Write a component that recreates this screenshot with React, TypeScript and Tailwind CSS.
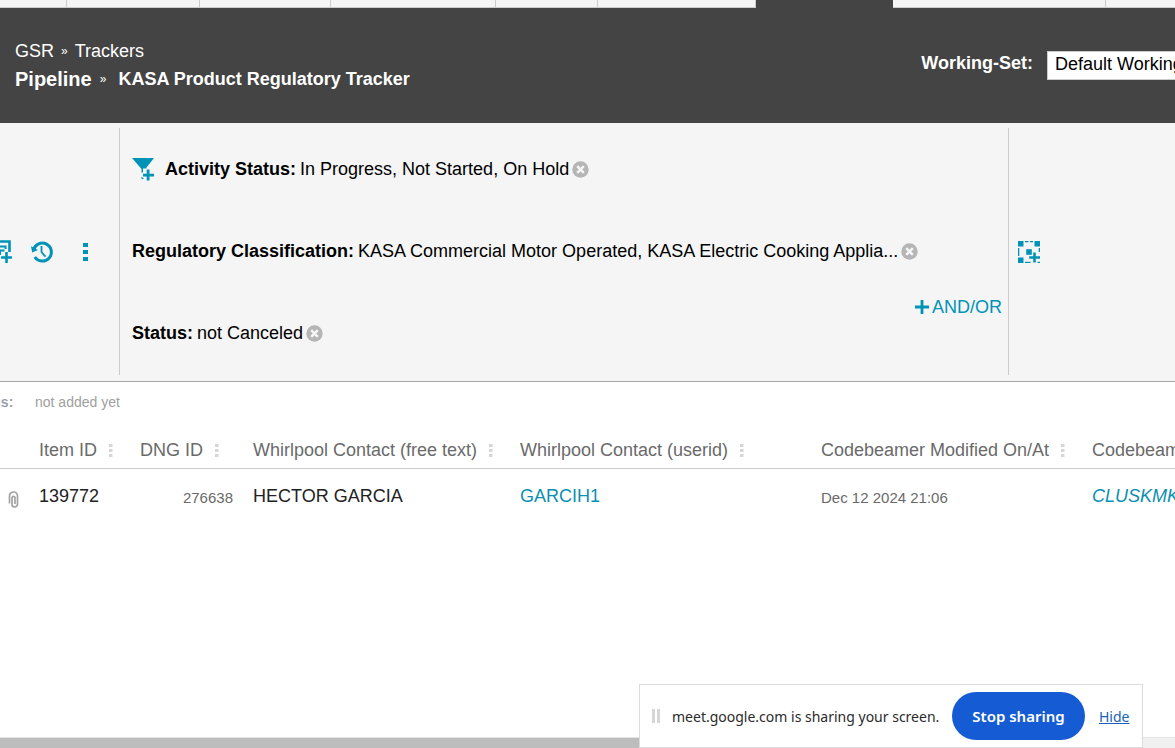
import type { ReactNode } from "react";

const tabWidths = [
  "w-[67px]",
  "w-[133px]",
  "w-[131px]",
  "w-[165px]",
  "w-[102px]",
  "w-[158px]",
];

function TabStrip() {
  return (
    <nav aria-label="Sections" className="flex h-2 shrink-0 bg-[#444444]">
      {tabWidths.map((width) => (
        <span key={width} className={`${width} shrink-0 border-r border-b border-[#cccccc] bg-[#f5f5f5]`} />
      ))}
      <span className="w-[137px] shrink-0" />
      <span className="w-[213px] shrink-0 border-r border-b border-[#cccccc] bg-[#f5f5f5]" />
      <span className="flex-1 border-b border-[#cccccc] bg-[#f5f5f5]" />
    </nav>
  );
}

function Header() {
  return (
    <header className="flex h-[115px] shrink-0 justify-between overflow-hidden bg-[#444444] pl-[15px] text-white">
      <div className="flex flex-col pt-[29px]">
        <div className="flex h-7 items-center gap-[7px] text-[18px]">
          <a href="#gsr">GSR</a>
          <span className="text-[12px]">»</span>
          <a href="#trackers">Trackers</a>
        </div>
        <div className="flex h-7 items-center">
          <a href="#pipeline" className="text-[20px] font-bold">Pipeline</a>
          <span className="ml-2 text-[12px]">»</span>
          <h1 className="ml-3 text-[18px] font-bold">KASA Product Regulatory Tracker</h1>
        </div>
      </div>
      <div className="-mr-16 flex shrink-0 items-start gap-[14px] pt-[43px] text-[18px]">
        <label htmlFor="working-set" className="font-bold leading-6">Working-Set:</label>
        <select
          id="working-set"
          className="h-[29px] w-48 appearance-none border border-[#cccccc] bg-white px-[7px] pb-1 leading-6 text-black"
        >
          <option>Default Working-Set</option>
        </select>
      </div>
    </header>
  );
}

function RemoveButton({ name }: { name: string }) {
  return (
    <button type="button" aria-label={`Remove ${name}`} className="shrink-0">
      <svg width="17" height="17" viewBox="0 0 17 17">
        <circle cx="8.5" cy="8.5" r="8.2" fill="#b5b5b5" />
        <path d="M5.2 5.2l6.6 6.6M11.8 5.2l-6.6 6.6" stroke="#f5f5f5" strokeWidth="2.600" />
      </svg>
    </button>
  );
}

function Criterion({ name, value, icon }: { name: string; value: string; icon?: ReactNode }) {
  return (
    <li className="flex h-[82px] items-center whitespace-nowrap text-[18px] text-black">
      {icon}
      <strong className="mr-1">{name}:</strong>
      <span className="mr-[3px]">{value}</span>
      <RemoveButton name={name} />
    </li>
  );
}

function FunnelPlusIcon() {
  return (
    <svg width="22" height="23" viewBox="0 0 22 23" className="mr-[11px] shrink-0" fill="#0093b8">
      <path d="M0 0h22l-7.500 9.500v1h-3.500v4H9.500v-3.500z" />
      <path d="M14.700 11.500h2.800v4.300H22v2.700h-4.500V22.500h-2.800V18.500H11v-2.700h3.700z" />
      <path d="M9.500 18.500l2.500 2.500H9.500z" />
    </svg>
  );
}

function FilterBar() {
  return (
    <section aria-label="Filters" className="flex shrink-0 border-b border-[#a6a6a6] bg-[#f5f5f5] pt-[5px] pb-[6px] text-[#0093b8]">
      <div className="flex w-[120px] shrink-0 items-center overflow-hidden border-r border-[#cccccc]">
        <button type="button" aria-label="Add view" className="-ml-[11px] shrink-0">
          <svg width="23" height="23" viewBox="0 0 23 23" fill="none" stroke="currentColor">
            <path d="M10 19.500H1.500V1.500H20.500V12" strokeWidth="2.600" />
            <path d="M5 15V6.500h11.500V9M11 15V10.500h4.500" strokeWidth="2" />
            <path d="M17.500 12V23M12 17.500h11" strokeWidth="2.600" />
          </svg>
        </button>
        <button type="button" aria-label="History" className="ml-[19px] shrink-0">
          <svg width="22" height="22" viewBox="0 0 22 22" fill="none" stroke="currentColor">
            <path d="M2.600 9A9 9 0 1 1 3.800 16" strokeWidth="3" />
            <path d="M0 5.200l1.200 6.300 5.700-2.600z" fill="currentColor" stroke="none" />
            <path d="M10.500 5v6l4 4.700" strokeWidth="1.800" />
          </svg>
        </button>
        <button type="button" aria-label="More options" className="ml-[30px] shrink-0">
          <svg width="5" height="18" viewBox="0 0 5 18" fill="currentColor">
            <path d="M0 0h5v4H0zM0 7h5v4H0zM0 14h5v4H0z" />
          </svg>
        </button>
      </div>
      <div className="flex min-w-0 flex-1 items-end justify-between border-r border-[#cccccc] pr-[6px] pl-3">
        <ul className="min-w-0 pb-px">
          <Criterion name="Activity Status" value="In Progress, Not Started, On Hold" icon={<FunnelPlusIcon />} />
          <Criterion
            name="Regulatory Classification"
            value="KASA Commercial Motor Operated, KASA Electric Cooking Applia..."
          />
          <Criterion name="Status" value="not Canceled" />
        </ul>
        <button type="button" className="mb-14 flex shrink-0 items-center gap-[3px] text-[18px] leading-6">
          <svg width="14" height="14" viewBox="0 0 14 14" fill="currentColor">
            <path d="M5.600 0h2.800v5.600H14v2.800H8.400V14H5.600V8.400H0V5.600h5.600z" />
          </svg>
          AND/OR
        </button>
      </div>
      <div className="flex w-[166px] shrink-0 items-center pl-[9px]">
        <button type="button" aria-label="Add group">
          <svg width="22" height="22" viewBox="0 0 22 22" fill="currentColor">
            <path d="M0 0h5.500v5.500H0zM16.500 0H22v5.500h-5.500zM0 16.500h5.500V22H0z" />
            <path d="M7 0h3.500v1.300H7zM12 0h3v1.300h-3zM0 7h1.300v8H0zM20.700 7H22v4h-1.300zM7 20.700h5.500V22H7zM19.500 20.700H22V22h-2.500z" />
            <path d="M8.200 8.200h5.600v5.600H8.200z" />
            <path d="M15.200 11.500h2.600v3.700H22v2.600h-4.200V21.500h-2.600v-3.700H11.200v-2.600h4z" />
          </svg>
        </button>
      </div>
    </section>
  );
}

function ColumnHead({ children }: { children: ReactNode }) {
  return (
    <th scope="col" className="h-9 pt-0.5 pr-2 pl-3 text-left font-normal">
      <div className="flex items-center gap-3">
        {children}
        <svg width="4" height="13" viewBox="0 0 4 13" fill="#d6d6d6" className="shrink-0">
          <path d="M0 0h3.500v3H0zM0 5h3.500v3H0zM0 10h3.500v3H0z" />
        </svg>
      </div>
    </th>
  );
}

function Results() {
  return (
    <main className="min-h-0 flex-1 overflow-hidden">
      <div className="flex h-10 items-center text-[14px] text-[#a0a0a0]">
        <span className="-ml-[23px] w-[58px] font-bold text-[#9aa0ac]">Tags:</span>
        <span>not added yet</span>
      </div>
      <table className="mt-2.5 w-full table-fixed border-collapse whitespace-nowrap text-[18px]">
        <colgroup>
          <col className="w-[27px]" />
          <col className="w-[101px]" />
          <col className="w-[113px]" />
          <col className="w-[267px]" />
          <col className="w-[301px]" />
          <col className="w-[271px]" />
          <col />
        </colgroup>
        <thead>
          <tr className="border-b border-[#cccccc] text-[#6a6a6a]">
            <th aria-label="Attachments" />
            <ColumnHead>Item ID</ColumnHead>
            <ColumnHead>DNG ID</ColumnHead>
            <ColumnHead>Whirlpool Contact (free text)</ColumnHead>
            <ColumnHead>Whirlpool Contact (userid)</ColumnHead>
            <ColumnHead>Codebeamer Modified On/At</ColumnHead>
            <ColumnHead>Codebeamer</ColumnHead>
          </tr>
        </thead>
        <tbody>
          <tr className="h-14 text-[#222222]">
            <td className="pt-[7px] pl-2">
              <svg width="11" height="18" viewBox="0 0 11 18" fill="none" stroke="#a3a3a3" strokeWidth="1.700">
                <path d="M1.500 12.500V5a4 4 0 0 1 8 0v8.500a3 3 0 0 1-5.500 1V6.500a1.600 1.600 0 0 1 3 0V13" />
              </svg>
            </td>
            <td className="pr-2 pl-3">139772</td>
            <td className="pt-1 pr-2 text-right text-[15px] text-[#6a6a6a]">276638</td>
            <td className="pr-2 pl-3">HECTOR GARCIA</td>
            <td className="pr-2 pl-3">
              <a href="#garcih1" className="text-[#0b8fb3]">GARCIH1</a>
            </td>
            <td className="pt-1 pr-2 pl-3 text-[15px] text-[#6a6a6a]">Dec 12 2024 21:06</td>
            <td className="pl-3">
              <a href="#cluskmk" className="text-[#0b8fb3] italic">CLUSKMK</a>
            </td>
          </tr>
        </tbody>
      </table>
    </main>
  );
}

function SharingNotice() {
  return (
    <aside className="absolute right-8 bottom-0 flex h-16 w-[504px] items-center border border-[#dcdce0] bg-white pl-3 font-['Noto_Sans','Open_Sans',sans-serif] text-[14px] text-[#2b2b2b]">
      <span className="flex gap-0.5">
        <span className="h-[14px] w-[3px] bg-[#d6d6d6]" />
        <span className="h-[14px] w-[3px] bg-[#d6d6d6]" />
      </span>
      <span className="ml-3 w-[280px] whitespace-nowrap">meet.google.com is sharing your screen.</span>
      <button type="button" className="h-12 w-[133px] shrink-0 rounded-full bg-[#155cd4] text-[15px] font-semibold text-white">
        Stop sharing
      </button>
      <a href="#hide" className="ml-[14px] text-[#1a62b8] underline">Hide</a>
    </aside>
  );
}

export default function App() {
  return (
    <div className="relative flex h-screen flex-col overflow-hidden bg-white font-['Liberation_Sans',Arial,sans-serif]">
      <TabStrip />
      <Header />
      <FilterBar />
      <Results />
      <div className="h-[11px] shrink-0 border-t border-[#e4e4e4] bg-[#f0f0f0]">
        <div className="h-full w-[56%] bg-[#bdbdbd]" />
      </div>
      <SharingNotice />
    </div>
  );
}
